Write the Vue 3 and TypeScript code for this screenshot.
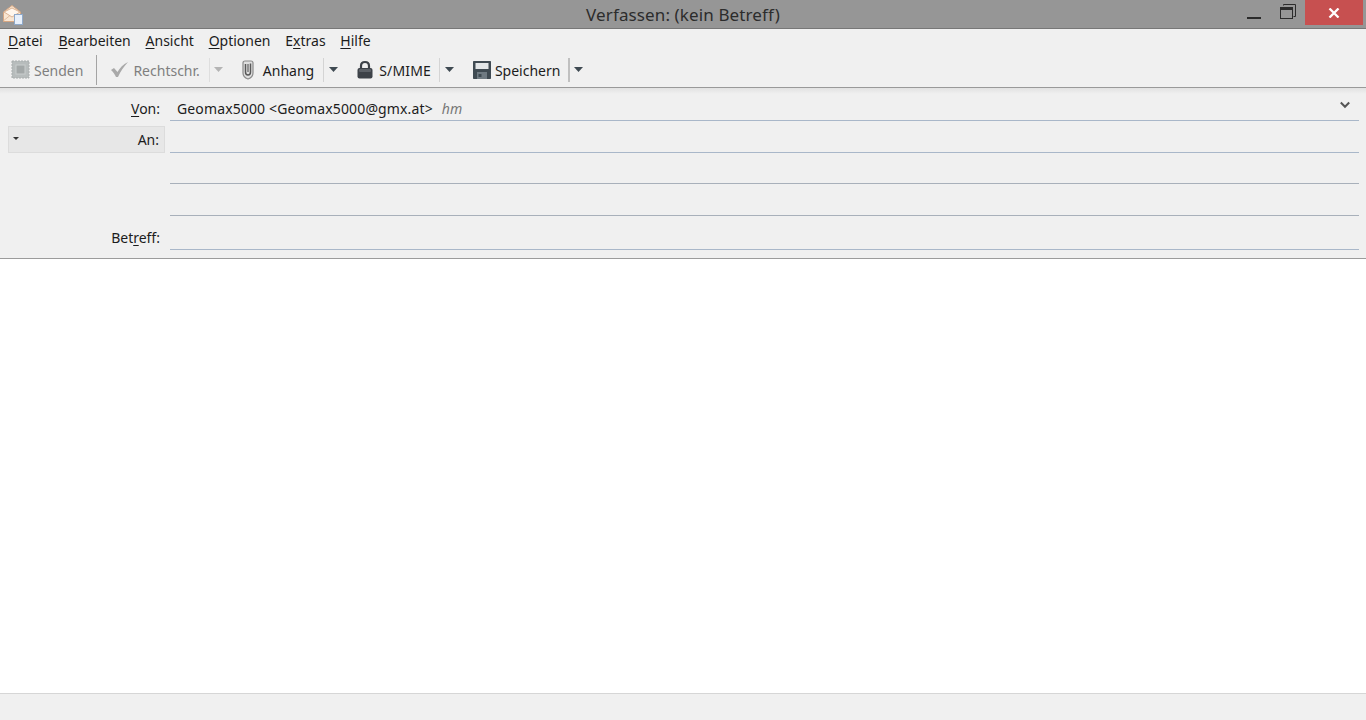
<script setup lang="ts">
const menus = [
  { k: 'D', r: 'atei' },
  { k: 'B', r: 'earbeiten' },
  { k: 'A', r: 'nsicht' },
  { k: 'O', r: 'ptionen' },
  { p: 'E', k: 'x', r: 'tras' },
  { k: 'H', r: 'ilfe' },
]
</script>

<template>
  <div class="win">
    <header class="titlebar">
      <svg class="appicon" width="20" height="20" viewBox="0 0 20 20">
        <path d="M0.500 7 L9 0.500 L17.500 7 V16.500 H0.500 Z" fill="#f9e6d2" stroke="#d6a682" />
        <path d="M0.800 15.500 L7 10.500 M17 15 L11 10.500" fill="none" stroke="#e3bd9f" />
        <path d="M1 7 L9 12 L17 7 L9 3 Z" fill="#fff6ec" stroke="#dcb495" />
        <rect x="11.500" y="9.500" width="8" height="10" fill="#e8f0fb" stroke="#8fa9c9" />
      </svg>
      <div class="title">Verfassen: (kein Betreff)</div>
      <div class="winctl">
        <svg class="wbtn" width="14" height="4" viewBox="0 0 14 4"><rect y="1" width="14" height="2" fill="#2b2b2b" /></svg>
        <svg class="wbtn rest" width="16" height="16" viewBox="0 0 16 16">
          <path d="M3.500 1.500 V0.500 H15.500 V12.500 H13.500" fill="none" stroke="#2b2b2b" />
          <rect x="0.500" y="3.500" width="12" height="11" fill="none" stroke="#2b2b2b" />
          <rect x="0" y="3" width="13" height="3" fill="#2b2b2b" />
        </svg>
        <div class="close">
          <svg width="12" height="10" viewBox="0 0 12 10"><path d="M1.500 .5 L10.500 9.500 M10.500 .5 L1.500 9.500" stroke="#fff" stroke-width="2.300" /></svg>
        </div>
      </div>
    </header>

    <nav class="menubar">
      <span v-for="m in menus" :key="m.k" class="menu">{{ m.p }}<u>{{ m.k }}</u>{{ m.r }}</span>
    </nav>

    <div class="toolbar">
      <div class="tool dis send">
        <svg width="19" height="19" viewBox="0 0 19 19">
          <path d="M1 1 H18 V18 H1 Z" fill="#b7bcbc" stroke="#a8adad" stroke-dasharray="2 1" />
          <rect x="5" y="5" width="9" height="9" fill="#a3a8a8" stroke="#c9cdcd" />
        </svg>
        <span>Senden</span>
      </div>
      <div class="sep dark"></div>
      <div class="tool dis spell">
        <svg width="19" height="17" viewBox="0 0 19 17">
          <path d="M1 9 L4 7 L7.500 11 C10 6.500 13 3.500 18 1 C13.500 6 10.500 10.500 8 16 H6 C5 13.500 3 11 1 9 Z" fill="#a9a9a9" />
        </svg>
        <span>Rechtschr.</span>
      </div>
      <div class="sep"></div>
      <svg class="arrow" width="9" height="5" viewBox="0 0 9 5"><path d="M0 0 H9 L4.500 5 Z" fill="#b4b4b4" /></svg>

      <div class="tool attach">
        <svg width="14" height="20" viewBox="0 0 14 20">
          <path d="M2 3 C2 1.800 3 1 4 1 H10 C11 1 12 1.800 12 3 V13 C12 16 10 18 7 19 C4 18 2 16 2 13 Z" fill="#dfdfdf" stroke="#8a8a8a" stroke-width="1.200" />
          <path d="M4.500 4 V12 C4.500 13.800 5.500 15 7 15 C8.500 15 9.500 13.800 9.500 12 V3.500" fill="none" stroke="#585858" stroke-width="1.500" />
          <path d="M7 4 V12" fill="none" stroke="#6a6a6a" stroke-width="1.300" />
        </svg>
        <span>Anhang</span>
      </div>
      <div class="sep wide"></div>
      <svg class="arrow" width="9" height="5" viewBox="0 0 9 5"><path d="M0 0 H9 L4.500 5 Z" fill="#3f4a52" /></svg>

      <div class="tool smime">
        <svg width="16" height="19" viewBox="0 0 16 19">
          <path d="M4 9 V6 C4 3.500 5.500 2 8 2 C10.500 2 12 3.500 12 6 V9" fill="none" stroke="#3d4248" stroke-width="2.200" />
          <rect x="0.500" y="8" width="15" height="10.500" rx="2" fill="#3d4248" />
          <rect x="2" y="9" width="12" height="3" rx="1" fill="#5c6167" />
        </svg>
        <span>S/MIME</span>
      </div>
      <div class="sep"></div>
      <svg class="arrow" width="9" height="5" viewBox="0 0 9 5"><path d="M0 0 H9 L4.500 5 Z" fill="#3f4a52" /></svg>

      <div class="tool save">
        <svg width="18" height="18" viewBox="0 0 18 18">
          <path d="M0 1 C0 .4 .4 0 1 0 H17 C17.600 0 18 .4 18 1 V17 C18 17.600 17.600 18 17 18 H1 C.4 18 0 17.600 0 17 Z" fill="#3f4a52" />
          <rect x="2.500" y="2" width="13" height="6" fill="#e3e6e8" />
          <rect x="4" y="11" width="10" height="7" fill="#6f7a82" />
          <rect x="5.500" y="13" width="3" height="3" fill="#3f4a52" />
        </svg>
        <span>Speichern</span>
      </div>
      <div class="sep thick"></div>
      <svg class="arrow" width="9" height="5" viewBox="0 0 9 5"><path d="M0 0 H9 L4.500 5 Z" fill="#3f4a52" /></svg>
    </div>

    <section class="fields">
      <div class="row from">
        <label class="lbl"><u>V</u>on:</label>
        <div class="input identity">
          <span class="addr">Geomax5000 &lt;Geomax5000@gmx.at&gt;</span>
          <em class="hint">hm</em>
          <svg class="chev" width="10" height="8" viewBox="0 0 10 8"><path d="M.8 1.500 L5 5.800 L9.200 1.500" fill="none" stroke="#555" stroke-width="2" /></svg>
        </div>
      </div>
      <div class="row to">
        <div class="tobtn">
          <svg width="6" height="3" viewBox="0 0 6 3"><path d="M0 0 H6 L3 3 Z" fill="#333" /></svg>
          <label class="tolbl">An:</label>
        </div>
        <div class="input blue"></div>
      </div>
      <div class="row extra first"><div class="spacer"></div><div class="input"></div></div>
      <div class="row extra second"><div class="spacer"></div><div class="input"></div></div>
      <div class="row subject">
        <label class="lbl">Bet<u>r</u>eff:</label>
        <div class="input"></div>
      </div>
    </section>

    <main class="body"></main>
    <footer class="status"></footer>
  </div>
</template>

<style>
html, body { margin: 0; padding: 0; background: #fff; overflow: hidden; }
</style>

<style scoped>
.win {
  width: 1366px;
  height: 720px;
  display: flex;
  flex-direction: column;
  font-family: "Noto Sans", "Open Sans", sans-serif;
  font-size: 14px;
  color: #1c1c1c;
  background: #f0f0f0;
  overflow: hidden;
}
u { text-underline-offset: 2px; text-decoration-thickness: 1px; }

.titlebar {
  height: 28px;
  flex: none;
  background: #969696;
  border-bottom: 1px solid #777;
  display: flex;
  align-items: flex-start;
  position: relative;
}
.appicon { margin: 5px 0 0 3px; flex: none; }
.title {
  position: absolute;
  left: 0;
  right: 0;
  text-align: center;
  font-size: 17px;
  letter-spacing: 0.12px;
  color: #2c2c2c;
  line-height: 28px;
  top: 1px;
}
.winctl {
  margin-left: auto;
  display: flex;
  align-items: flex-start;
  height: 28px;
  padding-right: 3px;
}
.wbtn { margin-top: 16px; margin-right: 19px; flex: none; }
.wbtn.rest { margin-top: 4px; margin-right: 9px; }
.close {
  width: 58px;
  height: 25px;
  background: #c75050;
  display: flex;
  align-items: center;
  justify-content: center;
}

.menubar {
  height: 24px;
  flex: none;
  display: flex;
  align-items: center;
  padding: 0 0 0 8px;
  gap: 14.75px;
}
.menu { line-height: 24px; }
.menu:first-child { margin-right: 1px; }

.toolbar {
  height: 35px;
  flex: none;
  box-sizing: border-box;
  display: flex;
  align-items: center;
  border-bottom: 1px solid #999;
  padding: 0 0 1px 11px;
}
.tool { display: flex; align-items: center; gap: 4px; color: #1c1c1c; }
.tool span { padding-top: 2px; }
.tool.dis { color: #7f7f7f; }
.sep { width: 1px; height: 24px; background: #d4d4d4; flex: none; margin: 0 5px 0 8px; }
.sep.wide { margin-left: 9px; }
.sep.dark { background: #a4a4a4; height: 30px; margin: 0 13px 0 13px; }
.sep.thick { width: 2px; background: #c0c0c0; margin: 0 4px 0 8px; }
.arrow { flex: none; }
.spell + .sep { margin: 0 4px 0 9px; background: #dedede; }
.attach { margin-left: 18px; gap: 8px; }
.smime { margin-left: 19px; gap: 6px; }
.smime span { letter-spacing: 0.15px; }
.save { margin-left: 19px; gap: 4px; }

.fields {
  flex: none;
  height: 171px;
  box-sizing: border-box;
  border-bottom: 1px solid #9b9b9b;
  background: linear-gradient(#e2e2e2 0, #f0f0f0 6px);
  display: flex;
  flex-direction: column;
  padding: 0 7px 0 8px;
}
.row { display: flex; align-items: stretch; }
.lbl {
  width: 152px;
  flex: none;
  text-align: right;
  align-self: flex-end;
  line-height: 24px;
}
.spacer { width: 162px; flex: none; }
.input {
  flex: 1;
  border-bottom: 1px solid #a9b7c9;
  margin-left: 10px;
  box-sizing: border-box;
  display: flex;
  align-items: center;
}
.spacer + .input { margin-left: 0; }
.from { height: 33px; }
.to { height: 32px; }
.first { height: 31px; }
.second { height: 32px; }
.subject { height: 34px; }
.extra .input { border-bottom-color: #a8b0ba; }
.identity { padding: 8px 9px 0 7px; gap: 9px; height: 33px; }
.addr { color: #1c1c1c; letter-spacing: 0.13px; }
.hint { color: #777; }
.chev { margin-left: auto; margin-top: -6px; flex: none; }
.tobtn {
  width: 157px;
  height: 27px;
  flex: none;
  box-sizing: border-box;
  background: #e7e7e7;
  border: 1px solid #dcdcdc;
  display: flex;
  align-items: center;
  padding: 0 5px 0 4px;
  margin-top: 5px;
  margin-right: 5px;
}
.tobtn svg { margin-bottom: 3px; }
.tolbl { margin-left: auto; }
.to .input { margin-left: 0; }
.body { flex: 1; background: #fff; }
.status {
  height: 27px;
  flex: none;
  box-sizing: border-box;
  background: #f0f0f0;
  border-top: 1px solid #d6d6d6;
}
</style>
